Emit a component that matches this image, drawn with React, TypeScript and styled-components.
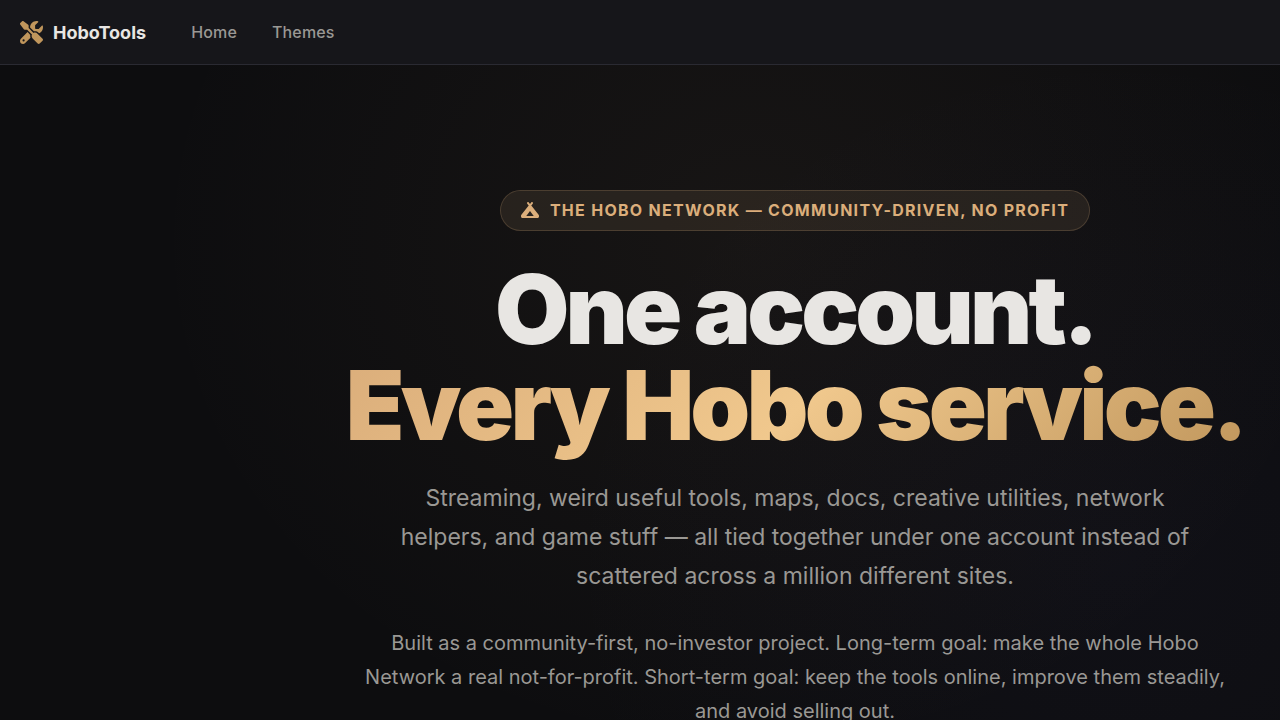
import React from "react";
import styled, { createGlobalStyle } from "styled-components";
import { FaCampground, FaScrewdriverWrench } from "react-icons/fa6";

const GlobalStyle = createGlobalStyle`
  *, *::before, *::after { box-sizing: border-box; }
  html { background: #0d0d0f; }
  body {
    margin: 0;
    overflow-x: hidden;
    color: #e8e6e3;
    font-family: Inter, "Liberation Sans", sans-serif;
  }
  #root { min-height: 100vh; }
`;

const NavBar = styled.header`
  display: flex;
  align-items: center;
  gap: 29px;
  height: 65px;
  padding: 0 20px;
  background: #16161a;
  border-bottom: 1px solid #2a2a32;
`;

const Brand = styled.a`
  display: flex;
  align-items: center;
  gap: 10px;
  color: #e8e6e3;
  font-size: 18px;
  font-weight: 700;
  text-decoration: none;

  svg { color: #c0965c; }
`;

const NavLinks = styled.nav`
  display: flex;
  gap: 3px;
`;

const NavLink = styled.a`
  padding: 8px 16px;
  color: #9a9894;
  font-size: 16px;
  font-weight: 500;
  letter-spacing: 0.01em;
  text-decoration: none;
`;

const Hero = styled.main`
  display: flex;
  flex-direction: column;
  align-items: center;
  min-height: calc(100vh - 65px);
  padding: 125px 24px 24px 334px;
  text-align: center;
  background:
    radial-gradient(ellipse 600px 520px at 750px 175px, rgba(219, 174, 123, 0.05), transparent),
    radial-gradient(ellipse 560px 520px at 1120px 500px, rgba(90, 90, 200, 0.04), transparent),
    #0d0d0f;
`;

const Badge = styled.p`
  display: inline-flex;
  align-items: center;
  gap: 11px;
  height: 41px;
  margin: 0 0 30px;
  padding: 0 20px 2px;
  border: 1px solid rgba(219, 174, 123, 0.2);
  border-radius: 21px;
  background: rgba(219, 174, 123, 0.1);
  color: #dbae7b;
  font-size: 16px;
  font-weight: 700;
  letter-spacing: 0.08em;
  text-transform: uppercase;
  white-space: nowrap;
`;

const Title = styled.h1`
  margin: 0 0 14px;
  font-size: 96px;
  font-weight: 900;
  line-height: 96px;
  letter-spacing: -0.04em;
  white-space: nowrap;
`;

const Accent = styled.span`
  display: block;
  padding-bottom: 12px;
  background: linear-gradient(135deg, #dbae7b 0%, #f0c88d 50%, #c0965c 100%);
  background-clip: text;
  -webkit-background-clip: text;
  color: transparent;
`;

const Lead = styled.p`
  max-width: 820px;
  margin: 0 0 30px;
  color: #9a9894;
  font-size: 23px;
  line-height: 39px;
`;

const Mission = styled.p`
  max-width: 880px;
  margin: 0;
  color: #9a9894;
  font-size: 20px;
  line-height: 34px;
`;

export default function App() {
  return (
    <>
      <GlobalStyle />
      <NavBar>
        <Brand href="#home">
          <FaScrewdriverWrench size={23} aria-hidden="true" />
          HoboTools
        </Brand>
        <NavLinks aria-label="Main">
          <NavLink href="#home">Home</NavLink>
          <NavLink href="#themes">Themes</NavLink>
        </NavLinks>
      </NavBar>
      <Hero>
        <Badge>
          <FaCampground size={18} aria-hidden="true" />
          The Hobo Network — community-driven, no profit
        </Badge>
        <Title>
          One account.
          <Accent>Every Hobo service.</Accent>
        </Title>
        <Lead>
          Streaming, weird useful tools, maps, docs, creative utilities, network helpers, and game
          stuff — all tied together under one account instead of scattered across a million
          different sites.
        </Lead>
        <Mission>
          Built as a community-first, no-investor project. Long-term goal: make the whole Hobo
          Network a real not-for-profit. Short-term goal: keep the tools online, improve them
          steadily, and avoid selling out.
        </Mission>
      </Hero>
    </>
  );
}
